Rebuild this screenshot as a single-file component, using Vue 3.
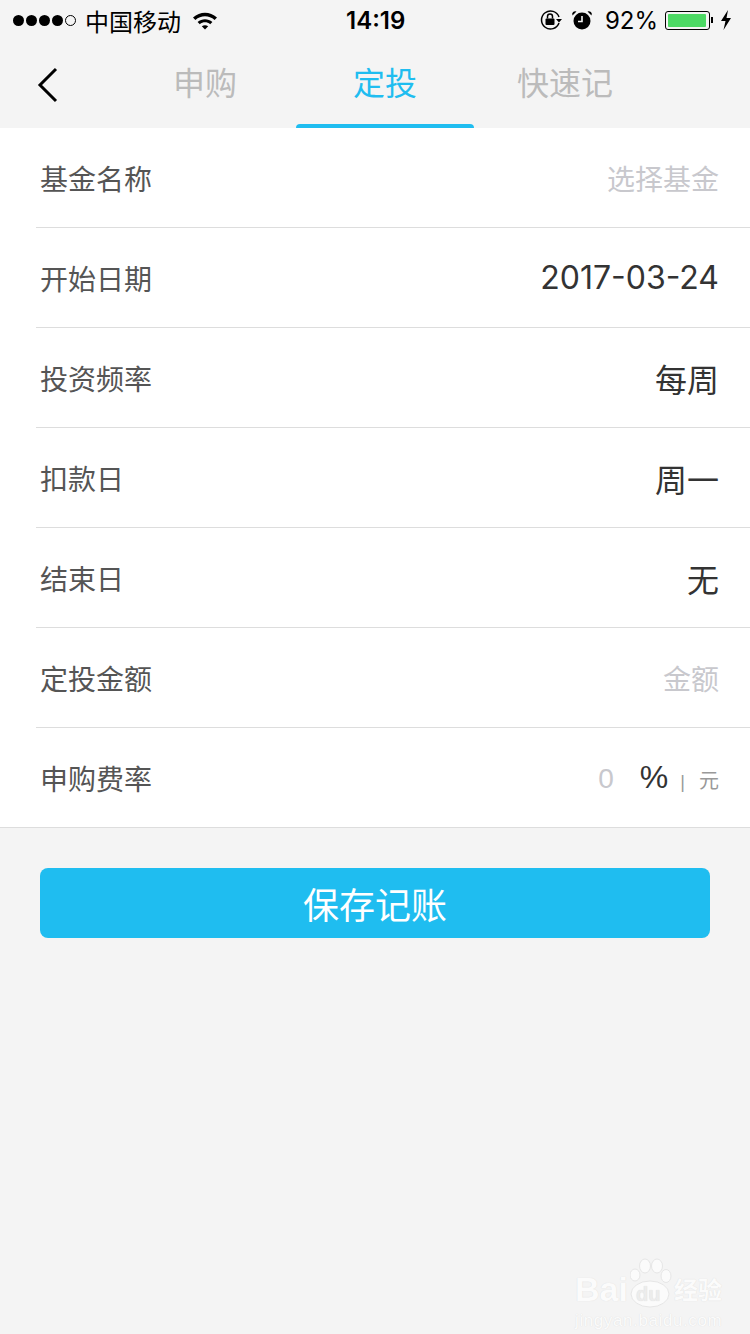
<script setup>
// Fund bookkeeping form: status bar, tabs, form rows and save button.
const tabs = [
  { id: 'buy', label: '申购' },
  { id: 'plan', label: '定投', active: true },
  { id: 'quick', label: '快速记' },
];

const rows = [
  { label: '基金名称', value: '选择基金', kind: 'hint' },
  { label: '开始日期', value: '2017-03-24', kind: 'val' },
  { label: '投资频率', value: '每周', kind: 'val' },
  { label: '扣款日', value: '周一', kind: 'val' },
  { label: '结束日', value: '无', kind: 'val' },
  { label: '定投金额', value: '金额', kind: 'hint' },
];
</script>

<template>
  <div class="page">
    <div class="status">
      <div class="status-left">
        <span class="signal">
          <i v-for="n in 4" :key="n" class="dot"></i>
          <i class="dot dot-empty"></i>
        </span>
        <span class="carrier">中国移动</span>
        <svg class="wifi" width="26" height="20" viewBox="0 0 26 20">
          <path d="M1 7.5C8 1.2 18 1.2 25 7.5L22.6 10C17 5 9 5 3.4 10Z" fill="#000" />
          <path d="M5.6 12C10 8.200 16 8.200 20.400 12L18.200 14.300C15 11.700 11 11.700 7.800 14.300Z" fill="#000" />
          <path d="M9.800 16.300C11.800 14.800 14.200 14.800 16.200 16.300L13 19.600Z" fill="#000" />
        </svg>
      </div>
      <span class="time">14:19</span>
      <div class="status-right">
        <svg class="lock" width="24" height="22" viewBox="0 0 24 22">
          <path d="M20 8A9 9 0 1 0 20 14" fill="none" stroke="#000" stroke-width="1.500" />
          <path d="M17 10H23L20 13.500Z" fill="#000" />
          <rect x="6.500" y="9.500" width="9" height="6.500" rx="1" fill="#000" />
          <path d="M8.500 9.500V7.500A2.500 2.500 0 0 1 13.500 7.500V9.500" fill="none" stroke="#000" stroke-width="1.500" />
        </svg>
        <svg class="alarm" width="22" height="22" viewBox="0 0 22 22">
          <circle cx="11" cy="12" r="8.500" fill="#000" />
          <path d="M1.500 6.500L5.500 2.500A3 3 0 0 0 1.500 6.500ZM20.500 6.500L16.500 2.500A3 3 0 0 1 20.500 6.500Z" fill="#000" />
          <path d="M11 7V12.500H7" fill="none" stroke="#f4f4f4" stroke-width="1.600" />
        </svg>
        <span class="percent">92%</span>
        <span class="battery"><span class="battery-fill"></span></span>
        <span class="battery-tip"></span>
        <svg class="bolt" width="12" height="20" viewBox="0 0 12 20">
          <path d="M8 0L1 11H5.500L3.500 20L11 8H6.500Z" fill="#000" />
        </svg>
      </div>
    </div>

    <div class="nav">
      <svg class="back" width="22" height="36" viewBox="0 0 22 36">
        <path d="M19 2L3 18L19 34" fill="none" stroke="#000" stroke-width="3" />
      </svg>
      <div class="tabs">
        <div v-for="tab in tabs" :key="tab.id" class="tab" :class="{ active: tab.active }">
          {{ tab.label }}
        </div>
      </div>
    </div>

    <div class="form">
      <div v-for="row in rows" :key="row.label" class="row">
        <span class="label">{{ row.label }}</span>
        <span :class="row.kind">{{ row.value }}</span>
      </div>
      <div class="row row-last">
        <span class="label">申购费率</span>
        <div class="fee">
          <span class="fee-zero">0</span>
          <span class="fee-pct">%</span>
          <span class="fee-sep">|</span>
          <span class="fee-unit">元</span>
        </div>
      </div>
    </div>

    <div class="actions">
      <button class="save">保存记账</button>
    </div>

    <div class="watermark">
      <div class="wm-top">
        <span class="wm-bai">Bai</span>
        <span class="wm-paw">
          <svg width="42" height="50" viewBox="0 0 42 50">
            <g fill="#fbfbfb" stroke="#e6e6e6" stroke-width="1">
              <ellipse cx="5" cy="17" rx="5" ry="6" />
              <ellipse cx="15" cy="8" rx="5.500" ry="7" />
              <ellipse cx="27" cy="8" rx="5.500" ry="7" />
              <ellipse cx="36" cy="18" rx="5" ry="6.500" />
              <ellipse cx="20" cy="36" rx="19" ry="13" />
            </g>
          </svg>
          <span class="wm-du">du</span>
        </span>
        <span class="wm-cn">经验</span>
      </div>
      <div class="wm-url">jingyan.baidu.com</div>
    </div>
  </div>
</template>

<style>
body {
  background: #f4f4f4;
}
</style>

<style scoped>
.page {
  position: relative;
  width: 750px;
  height: 1334px;
  overflow: hidden;
  background: #f4f4f4;
  font-family: "Liberation Sans", "Noto Sans CJK SC", sans-serif;
  color: #333;
}

.status {
  position: relative;
  display: flex;
  align-items: center;
  justify-content: space-between;
  height: 40px;
  padding: 0 18px 0 13px;
  color: #000;
}
.status-left,
.status-right {
  display: flex;
  align-items: center;
}
.signal {
  display: flex;
  gap: 2px;
}
.dot {
  width: 11px;
  height: 11px;
  border-radius: 50%;
  background: #000;
}
.dot-empty {
  background: none;
  border: 1px solid #000;
  box-sizing: border-box;
}
.carrier {
  margin-left: 9px;
  font-size: 24px;
}
.wifi {
  margin-left: 11px;
}
.time {
  position: absolute;
  left: 346px;
  font-family: "Inter", "Liberation Sans", sans-serif;
  font-size: 24px;
  font-weight: 600;
}
.lock {
  margin-right: 8px;
}
.alarm {
  margin-right: 12px;
}
.percent {
  font-family: "Inter", "Liberation Sans", sans-serif;
  font-size: 24px;
  margin-right: 7px;
}
.battery {
  display: flex;
  width: 45px;
  height: 19px;
  padding: 2px;
  box-sizing: border-box;
  border: 1px solid #000;
  border-radius: 3px;
}
.battery-fill {
  width: 38px;
  background: #4cd964;
  border-radius: 1px;
}
.battery-tip {
  width: 2px;
  height: 6px;
  margin-left: 1px;
  background: #000;
}
.bolt {
  margin-left: 7px;
}

.nav {
  position: relative;
  display: flex;
  height: 88px;
}
.back {
  position: absolute;
  left: 37px;
  top: 27px;
}
.tabs {
  display: flex;
  margin-left: 115px;
}
.tab {
  width: 180px;
  height: 88px;
  box-sizing: border-box;
  padding-top: 22px;
  text-align: center;
  font-size: 32px;
  line-height: 44px;
  color: #bbb;
}
.tab.active {
  position: relative;
  color: #1fbdf0;
}
.tab.active::after {
  content: "";
  position: absolute;
  left: 1px;
  right: 1px;
  bottom: 0;
  height: 4px;
  background: #1fbdf0;
  border-radius: 8px 8px 0 0;
}

.form {
  padding-left: 36px;
  background: #fff;
  border-bottom: 1px solid #ddd;
}
.row {
  display: flex;
  align-items: center;
  justify-content: space-between;
  height: 100px;
  box-sizing: border-box;
  padding: 0 31px 0 4px;
  border-bottom: 1px solid #ddd;
}
.row-last {
  height: 99px;
  border-bottom: 0;
}
.label {
  font-size: 28px;
  color: #555;
}
.hint {
  font-size: 28px;
  color: #c8c8cd;
}
.val {
  font-family: "Inter", "Liberation Sans", "Noto Sans CJK SC", sans-serif;
  font-size: 32px;
  color: #333;
}
.fee {
  display: flex;
  align-items: baseline;
}
.fee-zero {
  font-size: 28px;
  color: #c8c8cd;
}
.fee-pct {
  margin-left: 26px;
  font-size: 32px;
  color: #333;
}
.fee-sep {
  margin-left: 12px;
  font-size: 18px;
  color: #999;
}
.fee-unit {
  margin-left: 14px;
  font-size: 20px;
  color: #999;
}

.actions {
  padding: 40px 40px 0;
}
.save {
  display: block;
  width: 100%;
  height: 70px;
  border: 0;
  border-radius: 8px;
  background: #1fbdf0;
  color: #fff;
  font-family: inherit;
  font-size: 36px;
}

.watermark {
  position: absolute;
  left: 575px;
  top: 1252px;
  color: #fbfbfb;
  text-shadow: 0 0 1px #d8d8d8;
}
.wm-top {
  display: flex;
  align-items: flex-end;
  height: 56px;
}
.wm-bai {
  font-family: "Liberation Sans", sans-serif;
  font-size: 34px;
  font-weight: 700;
  line-height: 38px;
}
.wm-paw {
  position: relative;
  width: 42px;
  height: 50px;
  margin-left: 2px;
}
.wm-du {
  position: absolute;
  left: 6px;
  bottom: 2px;
  font-size: 20px;
  font-weight: 700;
  color: #ececec;
}
.wm-cn {
  margin-left: 2px;
  font-size: 24px;
  font-weight: 700;
  line-height: 34px;
}
.wm-url {
  margin-top: 3px;
  font-size: 17px;
  letter-spacing: 0.6px;
  line-height: 20px;
}
</style>
